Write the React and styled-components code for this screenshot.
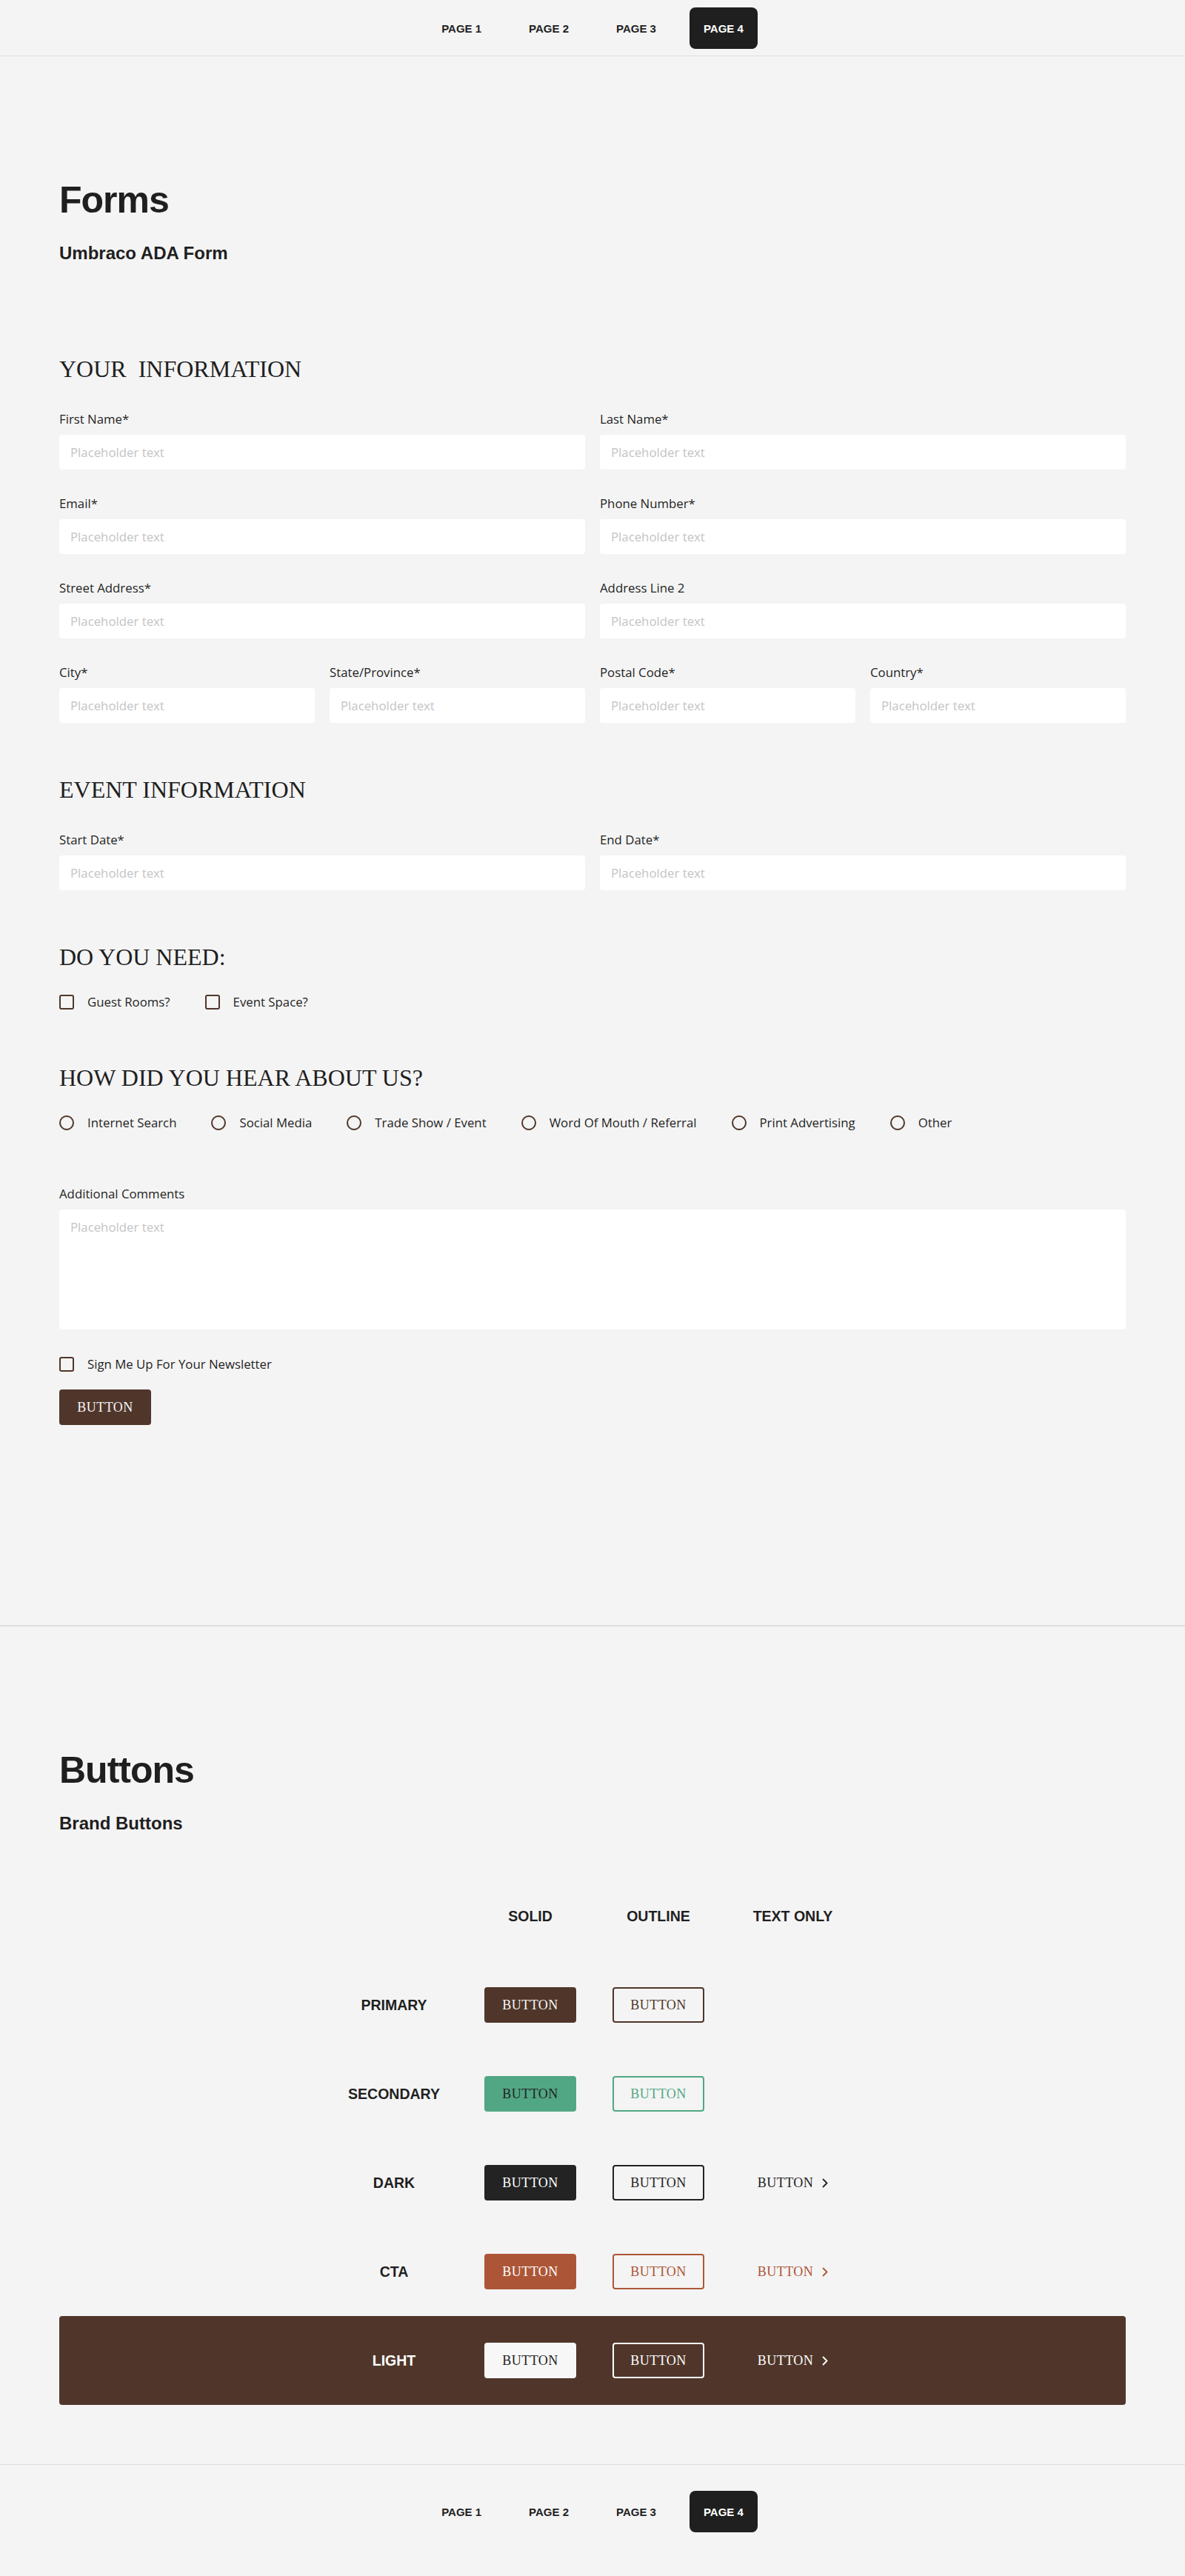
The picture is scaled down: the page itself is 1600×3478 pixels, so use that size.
import React from "react";
import styled, { createGlobalStyle, css } from "styled-components";

const COLORS = {
  page: "#f4f4f4",
  ink: "#1f1f1f",
  brown: "#50362a",
  green: "#51a784",
  cta: "#ad5637",
  dark: "#232323",
  line: "#dedede",
  placeholder: "#c4c4c4",
};

const SANS_HEAD = `"Liberation Sans", Arial, Helvetica, sans-serif`;
const SANS_BODY = `"Open Sans", "Noto Sans", sans-serif`;
const SERIF = `"Liberation Serif", "Times New Roman", serif`;

const GlobalStyle = createGlobalStyle`
  * { box-sizing: border-box; }
  html, body { margin: 0; padding: 0; }
  body {
    background: ${COLORS.page};
    color: ${COLORS.ink};
    font-family: ${SANS_BODY};
  }
`;

/* ---------- Page navigation ---------- */
const Nav = styled.nav`
  display: flex;
  justify-content: center;
  gap: 26px;
  ${(p) =>
    p.$footer
      ? css`
          padding: 35px 0 60px;
          border-top: 1px solid ${COLORS.line};
        `
      : css`
          padding: 10px 0 9px;
          border-bottom: 1px solid ${COLORS.line};
        `}
`;

const NavItem = styled.a`
  display: inline-flex;
  align-items: center;
  justify-content: center;
  height: 56px;
  padding: 0 19px;
  border-radius: 8px;
  font-family: ${SANS_HEAD};
  font-weight: 700;
  font-size: 15px;
  text-decoration: none;
  color: ${(p) => (p.$active ? "#ffffff" : COLORS.ink)};
  background: ${(p) => (p.$active ? "#1f1f1f" : "transparent")};
`;

/* ---------- Sections ---------- */
const Section = styled.section`
  padding: 164px 80px ${(p) => p.$bottom}px;
  ${(p) =>
    p.$divided &&
    css`
      border-top: 2px solid ${COLORS.line};
    `}
`;

const Title = styled.h1`
  margin: 0;
  font-family: ${SANS_HEAD};
  font-weight: 700;
  font-size: 50px;
  line-height: 60px;
  letter-spacing: -1px;
  color: ${COLORS.ink};
`;

const Subtitle = styled.h2`
  margin: 27px 0 0;
  font-family: ${SANS_HEAD};
  font-weight: 700;
  font-size: 24px;
  line-height: 29px;
  color: ${COLORS.ink};
`;

/* ---------- Form ---------- */
const Form = styled.form`
  margin-top: 124px;
  display: flex;
  flex-direction: column;
  gap: 72px;
`;

const Group = styled.div`
  display: flex;
  flex-direction: column;
`;

const GroupTitle = styled.h3`
  margin: 0 0 ${(p) => (p.$tight ? 30 : 37)}px;
  font-family: ${SERIF};
  font-weight: 400;
  font-size: 32px;
  line-height: 37px;
  color: ${COLORS.ink};
  text-transform: uppercase;
`;

const FieldGrid = styled.div`
  display: grid;
  grid-template-columns: repeat(4, 1fr);
  column-gap: 20px;
  row-gap: 34px;
`;

const Field = styled.div`
  grid-column: span ${(p) => p.$span || 2};
  display: flex;
  flex-direction: column;
`;

const Label = styled.label`
  display: block;
  margin-bottom: 9px;
  font-size: 16.8px;
  line-height: 24px;
  color: ${COLORS.ink};
`;

const fieldBase = css`
  width: 100%;
  border: none;
  border-radius: 4px;
  background: #ffffff;
  font-family: ${SANS_BODY};
  font-size: 16.8px;
  color: ${COLORS.ink};
  outline: none;
  &::placeholder {
    color: ${COLORS.placeholder};
  }
`;

const Input = styled.input`
  ${fieldBase};
  height: 47px;
  padding: 0 15px;
`;

const TextArea = styled.textarea`
  ${fieldBase};
  height: 162px;
  padding: 12px 15px;
  line-height: 24px;
  resize: none;
`;

const OptionRow = styled.div`
  display: flex;
  align-items: center;
  gap: 47px;
  margin-top: ${(p) => p.$mt || 0}px;
`;

const Option = styled.label`
  display: inline-flex;
  align-items: center;
  gap: 18px;
  font-size: 16.8px;
  line-height: 24px;
  color: ${COLORS.ink};
`;

const Check = styled.input`
  appearance: none;
  -webkit-appearance: none;
  margin: 0;
  width: 20px;
  height: 20px;
  border: 2px solid ${COLORS.brown};
  border-radius: ${(p) => (p.type === "radio" ? "50%" : "3px")};
  background: transparent;
  flex: none;
`;

/* ---------- Buttons ---------- */
const tones = {
  primary: COLORS.brown,
  secondary: COLORS.green,
  dark: COLORS.dark,
  cta: COLORS.cta,
  light: "#ffffff",
};

const solidText = {
  primary: "#f6f6f6",
  secondary: COLORS.dark,
  dark: "#ffffff",
  cta: "#ffffff",
  light: COLORS.dark,
};

const Button = styled.button`
  display: inline-flex;
  align-items: center;
  justify-content: center;
  height: 48px;
  width: 124px;
  padding: 0;
  margin-top: ${(p) => p.$mt || 0}px;
  border-radius: 4px;
  font-family: ${SERIF};
  font-size: 18px;
  letter-spacing: 0.5px;
  cursor: pointer;
  ${(p) => {
    const tone = tones[p.$tone || "primary"];
    if (p.$variant === "outline") {
      return css`
        background: transparent;
        border: 2px solid ${tone};
        color: ${tone};
      `;
    }
    if (p.$variant === "text") {
      return css`
        width: auto;
        background: transparent;
        border: none;
        color: ${tone};
        gap: 12px;
      `;
    }
    return css`
      background: ${p.$tone === "light" ? "#f7f7f7" : tone};
      border: none;
      color: ${solidText[p.$tone || "primary"]};
    `;
  }}
`;

const Chevron = styled.svg`
  width: 8px;
  height: 13px;
  flex: none;
`;

const Matrix = styled.div`
  margin-top: 51px;
  display: flex;
  flex-direction: column;
`;

const MatrixRow = styled.div`
  display: grid;
  grid-template-columns: 195px 173px 173px 190px;
  justify-content: center;
  align-items: center;
  height: 120px;
  border-radius: 4px;
  background: ${(p) => (p.$dark ? COLORS.brown : "transparent")};
`;

const Cell = styled.div`
  display: flex;
  justify-content: center;
  align-items: center;
  font-family: ${SANS_HEAD};
  font-weight: 700;
  font-size: 19.5px;
  color: ${(p) => (p.$light ? "#ffffff" : COLORS.ink)};
`;

const ChevronIcon = () => (
  <Chevron viewBox="0 0 8 13" fill="none">
    <path
      d="M1.5 1.5 L6.5 6.5 L1.5 11.5"
      stroke="currentColor"
      strokeWidth="1.8"
      strokeLinecap="round"
      strokeLinejoin="round"
    />
  </Chevron>
);

const PageNav = ({ footer }) => (
  <Nav $footer={footer}>
    {["PAGE 1", "PAGE 2", "PAGE 3", "PAGE 4"].map((p, i) => (
      <NavItem key={p} href="#" $active={i === 3}>
        {p}
      </NavItem>
    ))}
  </Nav>
);

const TextField = ({ label, span }) => (
  <Field $span={span}>
    <Label>{label}</Label>
    <Input placeholder="Placeholder text" />
  </Field>
);

const rows = [
  { name: "PRIMARY", tone: "primary", text: false },
  { name: "SECONDARY", tone: "secondary", text: false },
  { name: "DARK", tone: "dark", text: true },
  { name: "CTA", tone: "cta", text: true },
  { name: "LIGHT", tone: "light", text: true, dark: true },
];

export default function App() {
  return (
    <>
      <GlobalStyle />
      <PageNav />

      <Section $bottom={270}>
        <Title>Forms</Title>
        <Subtitle>Umbraco ADA Form</Subtitle>

        <Form onSubmit={(e) => e.preventDefault()}>
          <Group>
            <GroupTitle>Your&nbsp; Information</GroupTitle>
            <FieldGrid>
              <TextField label="First Name*" />
              <TextField label="Last Name*" />
              <TextField label="Email*" />
              <TextField label="Phone Number*" />
              <TextField label="Street Address*" />
              <TextField label="Address Line 2" />
              <TextField label="City*" span={1} />
              <TextField label="State/Province*" span={1} />
              <TextField label="Postal Code*" span={1} />
              <TextField label="Country*" span={1} />
            </FieldGrid>
          </Group>

          <Group>
            <GroupTitle>Event Information</GroupTitle>
            <FieldGrid>
              <TextField label="Start Date*" />
              <TextField label="End Date*" />
            </FieldGrid>
          </Group>

          <Group>
            <GroupTitle $tight>Do You Need:</GroupTitle>
            <OptionRow>
              <Option>
                <Check type="checkbox" />
                Guest Rooms?
              </Option>
              <Option>
                <Check type="checkbox" />
                Event Space?
              </Option>
            </OptionRow>
          </Group>

          <Group>
            <GroupTitle $tight>How Did You Hear About Us?</GroupTitle>
            <OptionRow>
              {[
                "Internet Search",
                "Social Media",
                "Trade Show / Event",
                "Word Of Mouth / Referral",
                "Print Advertising",
                "Other",
              ].map((o) => (
                <Option key={o}>
                  <Check type="radio" name="hear" />
                  {o}
                </Option>
              ))}
            </OptionRow>
          </Group>

          <Group>
            <Label>Additional Comments</Label>
            <TextArea placeholder="Placeholder text" />
            <OptionRow $mt={35}>
              <Option>
                <Check type="checkbox" />
                Sign Me Up For Your Newsletter
              </Option>
            </OptionRow>
            <div>
              <Button type="submit" $mt={22} $tone="primary">
                BUTTON
              </Button>
            </div>
          </Group>
        </Form>
      </Section>

      <Section $divided $bottom={80}>
        <Title>Buttons</Title>
        <Subtitle>Brand Buttons</Subtitle>

        <Matrix>
          <MatrixRow>
            <Cell />
            <Cell>SOLID</Cell>
            <Cell>OUTLINE</Cell>
            <Cell>TEXT ONLY</Cell>
          </MatrixRow>
          {rows.map((r) => (
            <MatrixRow key={r.name} $dark={r.dark}>
              <Cell $light={r.dark}>{r.name}</Cell>
              <Cell>
                <Button type="button" $tone={r.tone}>
                  BUTTON
                </Button>
              </Cell>
              <Cell>
                <Button type="button" $tone={r.tone} $variant="outline">
                  BUTTON
                </Button>
              </Cell>
              <Cell>
                {r.text && (
                  <Button type="button" $tone={r.tone} $variant="text">
                    BUTTON
                    <ChevronIcon />
                  </Button>
                )}
              </Cell>
            </MatrixRow>
          ))}
        </Matrix>
      </Section>

      <PageNav footer />
    </>
  );
}
